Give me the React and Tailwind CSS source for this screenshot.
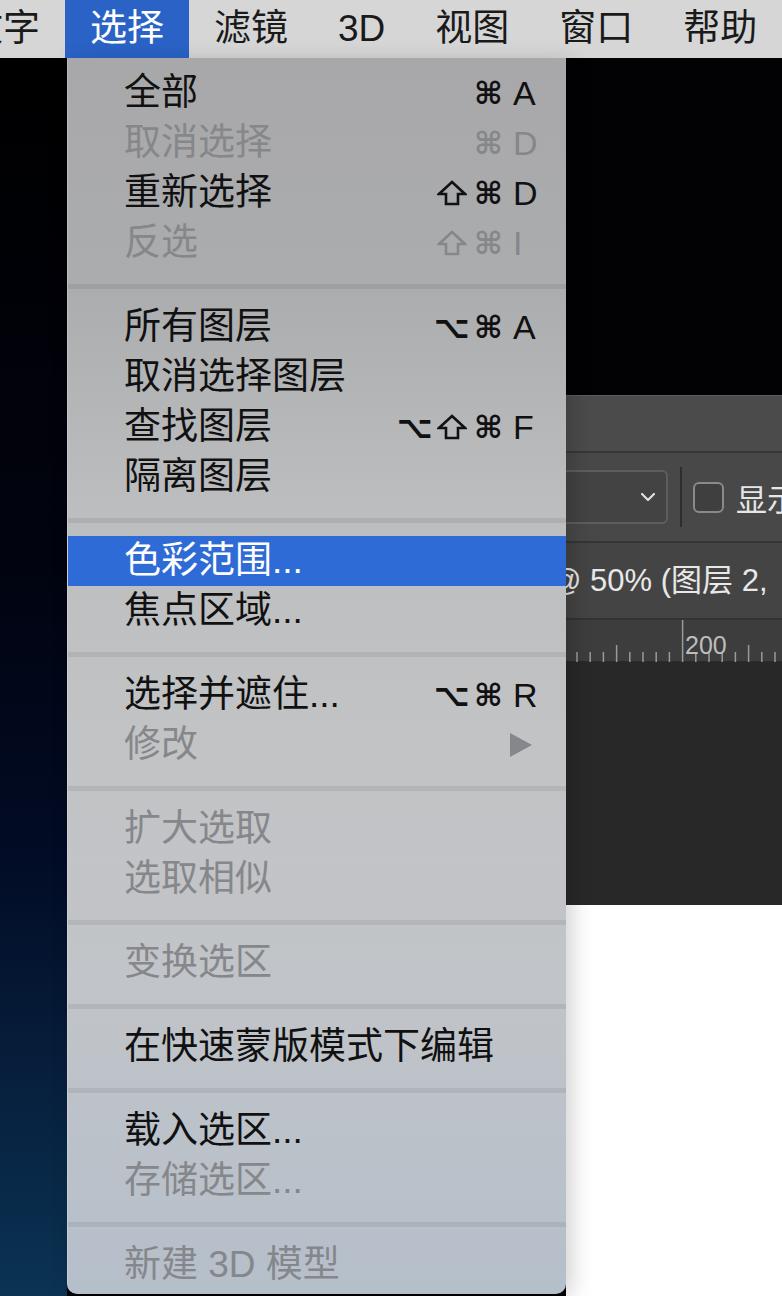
import React from 'react';

const FONT = { fontFamily: '"Liberation Sans", "Noto Sans CJK SC", sans-serif' };
const SYM = { fontFamily: '"DejaVu Sans", "Noto Sans CJK SC", sans-serif' };

const barItems = ['文字', '选择', '滤镜', '3D', '视图', '窗口', '帮助'];

// menu content: 'sep' = separator, otherwise a row
const menu = [
    { label: '全部', mods: ['⌘'], key: 'A' },
    { label: '取消选择', mods: ['⌘'], key: 'D', off: true },
    { label: '重新选择', mods: ['⇧', '⌘'], key: 'D' },
    { label: '反选', mods: ['⇧', '⌘'], key: 'I', off: true },
    'sep',
    { label: '所有图层', mods: ['⌥', '⌘'], key: 'A' },
    { label: '取消选择图层' },
    { label: '查找图层', mods: ['⌥', '⇧', '⌘'], key: 'F' },
    { label: '隔离图层' },
    'sep',
    { label: '色彩范围...', active: true },
    { label: '焦点区域...' },
    'sep',
    { label: '选择并遮住...', mods: ['⌥', '⌘'], key: 'R' },
    { label: '修改', off: true, sub: true },
    'sep',
    { label: '扩大选取', off: true },
    { label: '选取相似', off: true },
    'sep',
    { label: '变换选区', off: true },
    'sep',
    { label: '在快速蒙版模式下编辑' },
    'sep',
    { label: '载入选区...' },
    { label: '存储选区...', off: true },
    'sep',
    { label: '新建 3D 模型', off: true },
];

// shift key symbol, drawn as an outline arrow
const ShiftIcon = ({ color }) => (
    <svg width="30" height="26" viewBox="0 0 30 26">
        <path d="M15 2 L28 14 L21 14 L21 24 L9 24 L9 14 L2 14 Z" fill="none" stroke={color} strokeWidth="2.6" strokeLinejoin="miter" />
    </svg>
);

const MenuRow = ({ item }) => {
    const color = item.active ? 'text-white' : item.off ? 'text-[#85878a]' : 'text-[#111111]';
    const hex = item.off ? '#85878a' : '#111111';
    return (
        <div className={`flex items-center h-[50px] pl-[56px] pr-[29px] ${item.active ? 'bg-[#2f6bd6]' : ''} ${color}`}>
            <span className="flex-1 text-[37px] leading-[50px] whitespace-nowrap">{item.label}</span>
            {item.key && (
                <div className="flex items-center">
                    {item.mods.map((m, i) =>
                        m === '⇧' ? (
                            <span key={i} className="w-[37px] h-[50px] flex items-center justify-center">
                                <ShiftIcon color={hex} />
                            </span>
                        ) : (
                            <span key={i} className="w-[37px] flex justify-center text-[31px] font-bold leading-[50px]" style={SYM}>
                                {m}
                            </span>
                        )
                    )}
                    <span className="w-[24px] ml-[6px] text-[34px] leading-[50px]">{item.key}</span>
                </div>
            )}
            {item.sub && (
                <svg width="25" height="26" viewBox="0 0 25 26" className="mr-[4px]">
                    <path d="M2 1 L24 13 L2 25 Z" fill="#85878a" />
                </svg>
            )}
        </div>
    );
};

const Separator = () => (
    <div className="pt-[16px] pb-[13px]">
        <div className="h-[5px] bg-black/[0.07]" />
    </div>
);

const Ruler = () => {
    const ticks = [];
    for (let i = 0; i < 17; i++) {
        const x = 11 + i * 13.2;
        const long = i === 8;
        const mid = i === 3 || i === 13;
        ticks.push(
            <line key={i} x1={x} x2={x} y1={long ? 0 : mid ? 25 : 32} y2="42" stroke="#9a9a9a" strokeWidth="1.5" />
        );
    }
    return (
        <div className="relative h-[42px] shrink-0 bg-[#3d3d3d] border-b border-[#2a2a2a]">
            <svg width="216" height="42" className="block">{ticks}</svg>
            <span className="absolute left-[119px] top-[13px] text-[25px] leading-[25px] text-[#bdbdbd]">200</span>
        </div>
    );
};

export default function App() {
    return (
        <div className="w-[782px] h-[1296px] overflow-hidden flex flex-col bg-black" style={FONT}>
            {/* menu bar */}
            <div className="h-[58px] bg-[#d6d6d6] flex items-center overflow-hidden shrink-0">
                <div className="flex -ml-[59px]">
                    {barItems.map((t) => (
                        <div
                            key={t}
                            className={`px-[25px] h-[58px] shrink-0 text-[37px] leading-[58px] whitespace-nowrap ${t === '选择' ? 'bg-[#2a62c6] text-white' : 'text-[#1a1a1a]'}`}
                        >
                            {t}
                        </div>
                    ))}
                </div>
            </div>

            <div className="flex flex-1 min-h-0">
                {/* desktop strip */}
                <div className="w-[67px] shrink-0 bg-[linear-gradient(180deg,#000000_0%,#01030f_40%,#020c26_65%,#0b3354_100%)]" />

                {/* dropdown menu */}
                <div className="w-[499px] shrink-0 h-[1236px] rounded-b-[10px] border-l border-white/20 pt-[10px] bg-[linear-gradient(180deg,#a8a8aa_0%,#abacae_18%,#bcbdbf_36%,#c2c3c5_55%,#c1c4c8_75%,#b5bfca_100%)] shadow-[6px_4px_22px_rgba(0,0,0,0.18)] relative z-10">
                    {menu.map((m, i) => (m === 'sep' ? <Separator key={i} /> : <MenuRow key={i} item={m} />))}
                </div>

                {/* photoshop window behind */}
                <div className="flex-1 min-w-0 flex flex-col overflow-hidden">
                    <div className="h-[337px] shrink-0 bg-[#020204]" />
                    <div className="h-[58px] shrink-0 bg-[#4b4b4b] border-t border-[#5c5c5c] border-b-2 border-b-[#373737]" />
                    <div className="h-[90px] shrink-0 bg-[#484848] border-b-2 border-[#353535] flex items-center">
                        <div className="w-[102px] h-[54px] shrink-0 rounded-r-[6px] border-2 border-l-0 border-[#5d5d5d] bg-[#434343] flex items-center justify-end pr-[10px]">
                            <svg width="16" height="10" viewBox="0 0 16 10">
                                <path d="M2 2 L8 8 L14 2" fill="none" stroke="#e0e0e0" strokeWidth="2.2" strokeLinecap="round" strokeLinejoin="round" />
                            </svg>
                        </div>
                        <div className="w-[2px] h-[60px] shrink-0 bg-[#2e2e2e] ml-[12px]" />
                        <div className="w-[31px] h-[31px] shrink-0 rounded-[6px] border-2 border-[#8a8a8a] bg-[#3f3f3f] ml-[11px]" />
                        <span className="ml-[12px] shrink-0 text-[31px] leading-[31px] text-[#e6e6e6] whitespace-nowrap" style={{ fontFamily: '"Noto Sans CJK SC", sans-serif' }}>
                            显示
                        </span>
                    </div>
                    <div className="h-[77px] shrink-0 bg-[#444444] border-b-2 border-[#333333] flex items-center">
                        <span className="-ml-[16px] shrink-0 text-[31px] leading-[32px] text-[#e8e8e8] whitespace-nowrap">@ 50% (图层 2,</span>
                    </div>
                    <Ruler />
                    <div className="h-[243px] shrink-0 bg-[#282828]" />
                    <div className="flex-1 bg-white" />
                </div>
            </div>
        </div>
    );
}
